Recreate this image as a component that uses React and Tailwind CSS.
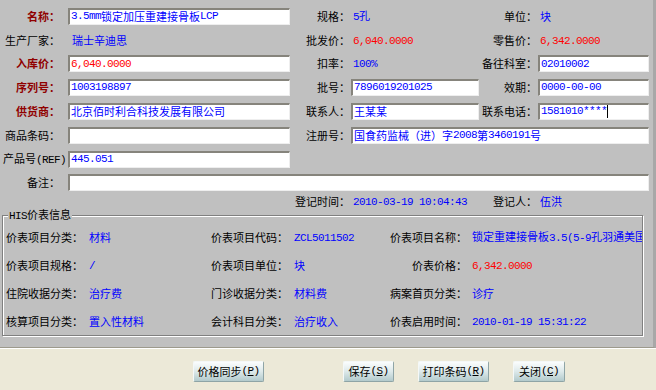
import React from "react";

const CJK_RE = /[\u2e80-\u9fff\uf900-\ufaff\uff00-\uffef\u3000-\u303f]/;
const SPLIT_RE = /[\u2e80-\u9fff\uf900-\ufaff\uff00-\uffef\u3000-\u303f]+|[^\u2e80-\u9fff\uf900-\ufaff\uff00-\uffef\u3000-\u303f]+/g;

function M({ t }) {
  const parts = t.match(SPLIT_RE) || [];
  return (
    <>
      {parts.map((p, i) =>
        CJK_RE.test(p) ? (
          <span key={i} className="font-['Noto_Sans_CJK_SC',sans-serif] text-[11px]">
            {p}
          </span>
        ) : (
          <span key={i} className="font-['Liberation_Mono',monospace] text-[11px] tracking-[-0.6px] whitespace-pre">
            {p}
          </span>
        )
      )}
    </>
  );
}

function Lab({ w, t, red }) {
  return (
    <div
      className={`${w} shrink-0 text-right whitespace-nowrap leading-[13px] ${
        red ? "text-[#900000] font-bold" : "text-black"
      }`}
    >
      <M t={t} />
    </div>
  );
}

function Val({ w, t, red, pl }) {
  return (
    <div
      className={`${w} ${pl} shrink-0 whitespace-nowrap leading-[13px] ${
        red ? "text-[#ff0000]" : "text-[#0000ff]"
      }`}
    >
      <M t={t} />
    </div>
  );
}

function Box({ w, ml, t = "", red, caret }) {
  return (
    <div
      className={`${w} ${ml} shrink-0 h-[17px] bg-white border-t-2 border-l-2 border-b border-r border-t-[#86847c] border-l-[#86847c] border-b-[#eeeeee] border-r-[#eeeeee] flex items-center pl-[1px] overflow-hidden whitespace-nowrap leading-[13px] ${
        red ? "text-[#ff0000]" : "text-[#0000ff]"
      }`}
    >
      <M t={t} />
      {caret && <span className="inline-block w-px h-[13px] bg-black" />}
    </div>
  );
}

function HisRow({ l1, v1, l2, v2, l3, v3, red3 }) {
  return (
    <div className="flex items-center h-[28px] w-[639px]">
      <Lab w="w-[80px]" t={l1} />
      <Val w="w-[128px]" pl="pl-[6px]" t={v1} />
      <Lab w="w-[77px]" t={l2} />
      <Val w="w-[102px]" pl="pl-[6px]" t={v2} />
      <Lab w="w-[77px]" t={l3} />
      <div
        className={`w-[175px] shrink-0 pl-[5px] whitespace-nowrap overflow-hidden leading-[13px] ${
          red3 ? "text-[#ff0000]" : "text-[#0000ff]"
        }`}
      >
        <M t={v3} />
      </div>
    </div>
  );
}

function Btn({ w, ml, label, key1 }) {
  return (
    <button
      className={`${w} ${ml} h-[21px] shrink-0 rounded-[2px] border border-t-[#f4f8f8] border-l-[#f4f8f8] border-b-[#8ea4a6] border-r-[#8ea4a6] bg-gradient-to-b from-[#fbfdfd] via-[#dde9ea] to-[#b2cacc] flex items-center justify-center text-black leading-[13px]`}
    >
      <M t={label} />
      <span className="font-['Liberation_Mono',monospace] text-[11px] tracking-[-0.6px]">
        (<span className="underline">{key1}</span>)
      </span>
    </button>
  );
}

export default function App() {
  return (
    <div className="w-[656px] h-[390px] overflow-hidden font-['Noto_Sans_CJK_SC',sans-serif] text-[11px] leading-[13px] text-black">
      <div className="h-[348px] bg-[#c0c0c0] border-r-[3px] border-r-[#a8a8a8] border-b border-b-[#9d9a8c] pt-[4px]">
        {/* Row 1 */}
        <div className="flex items-center h-[24px]">
          <Lab w="w-[60px]" t="名称：" red />
          <Box w="w-[222px]" ml="ml-[8px]" t="3.5mm锁定加压重建接骨板LCP" />
          <Lab w="w-[60px]" t="规格：" />
          <Val w="w-[128px]" pl="pl-[2px] ml-[1px]" t="5孔" />
          <Lab w="w-[58px]" t="单位：" />
          <Val w="w-[111px]" pl="pl-[2px] ml-[1px]" t="块" />
        </div>
        {/* Row 2 */}
        <div className="flex items-center h-[24px]">
          <Lab w="w-[60px]" t="生产厂家：" />
          <Val w="w-[222px]" pl="pl-[4px] ml-[8px]" t="瑞士辛迪思" />
          <Lab w="w-[60px]" t="批发价：" />
          <Val w="w-[128px]" pl="pl-[2px] ml-[1px]" t="6,040.0000" red />
          <Lab w="w-[58px]" t="零售价：" />
          <Val w="w-[111px]" pl="pl-[2px] ml-[1px]" t="6,342.0000" red />
        </div>
        {/* Row 3 */}
        <div className="flex items-center h-[23px]">
          <Lab w="w-[60px]" t="入库价：" red />
          <Box w="w-[222px]" ml="ml-[8px]" t="6,040.0000" red />
          <Lab w="w-[60px]" t="扣率：" />
          <Val w="w-[128px]" pl="pl-[2px] ml-[1px]" t="100%" />
          <Lab w="w-[58px]" t="备往科室：" />
          <Box w="w-[111px]" ml="ml-[1px]" t="02010002" />
        </div>
        {/* Row 4 */}
        <div className="flex items-center h-[24px]">
          <Lab w="w-[60px]" t="序列号：" red />
          <Box w="w-[222px]" ml="ml-[8px]" t="1003198897" />
          <Lab w="w-[60px]" t="批号：" />
          <Box w="w-[128px]" ml="ml-[1px]" t="7896019201025" />
          <Lab w="w-[58px]" t="效期：" />
          <Box w="w-[111px]" ml="ml-[1px]" t="0000-00-00" />
        </div>
        {/* Row 5 */}
        <div className="flex items-center h-[24px]">
          <Lab w="w-[60px]" t="供货商：" red />
          <Box w="w-[222px]" ml="ml-[8px]" t="北京佰时利合科技发展有限公司" />
          <Lab w="w-[60px]" t="联系人：" />
          <Box w="w-[128px]" ml="ml-[1px]" t="王某某" />
          <Lab w="w-[58px]" t="联系电话：" />
          <Box w="w-[111px]" ml="ml-[1px]" t="1581010****" caret />
        </div>
        {/* Row 6 */}
        <div className="flex items-center h-[24px]">
          <Lab w="w-[60px]" t="商品条码：" />
          <Box w="w-[222px]" ml="ml-[8px]" />
          <Lab w="w-[60px]" t="注册号：" />
          <Box w="w-[298px]" ml="ml-[1px]" t="国食药监械（进）字2008第3460191号" />
        </div>
        {/* Row 7 */}
        <div className="flex items-center h-[24px]">
          <div className="w-[68px] shrink-0 pl-[3px] whitespace-nowrap leading-[13px]">
            <M t="产品号(REF)" />
          </div>
          <Box w="w-[222px]" ml="ml-0" t="445.051" />
        </div>
        {/* Row 8 */}
        <div className="flex items-center h-[23px]">
          <Lab w="w-[60px]" t="备注：" />
          <Box w="w-[581px]" ml="ml-[8px]" />
        </div>
        {/* Row 9 */}
        <div className="flex items-center h-[14px]">
          <div className="w-[290px] shrink-0" />
          <Lab w="w-[60px]" t="登记时间：" />
          <Val w="w-[128px]" pl="pl-[2px] ml-[1px]" t="2010-03-19 10:04:43" />
          <Lab w="w-[58px]" t="登记人：" />
          <Val w="w-[111px]" pl="pl-[2px] ml-[1px]" t="伍洪" />
        </div>

        <fieldset className="ml-[2px] w-[641px] min-w-0 max-w-[641px] border border-[#808080] shadow-[inset_1px_1px_0_#ffffff,1px_1px_0_#ffffff]">
          <legend className="ml-[5px] px-[1px] leading-[13px] bg-[#c0c0c0]">
            <M t="HIS价表信息" />
          </legend>
          <HisRow l1="价表项目分类：" v1="材料" l2="价表项目代码：" v2="ZCL5011502" l3="价表项目名称：" v3="锁定重建接骨板3.5(5-9孔羽通美国)" />
          <HisRow l1="价表项目规格：" v1="/" l2="价表项目单位：" v2="块" l3="价表价格：" v3="6,342.0000" red3 />
          <HisRow l1="住院收据分类：" v1="治疗费" l2="门诊收据分类：" v2="材料费" l3="病案首页分类：" v3="诊疗" />
          <HisRow l1="核算项目分类：" v1="置入性材料" l2="会计科目分类：" v2="治疗收入" l3="价表启用时间：" v3="2010-01-19 15:31:22" />
        </fieldset>
      </div>

      <div className="h-[42px] bg-[#ece9d8] border-t border-t-white flex items-start pt-[12px]">
        <Btn w="w-[71px]" ml="ml-[193px]" label="价格同步" key1="P" />
        <Btn w="w-[51px]" ml="ml-[79px]" label="保存" key1="S" />
        <Btn w="w-[71px]" ml="ml-[24px]" label="打印条码" key1="R" />
        <Btn w="w-[52px]" ml="ml-[24px]" label="关闭" key1="C" />
      </div>
    </div>
  );
}
